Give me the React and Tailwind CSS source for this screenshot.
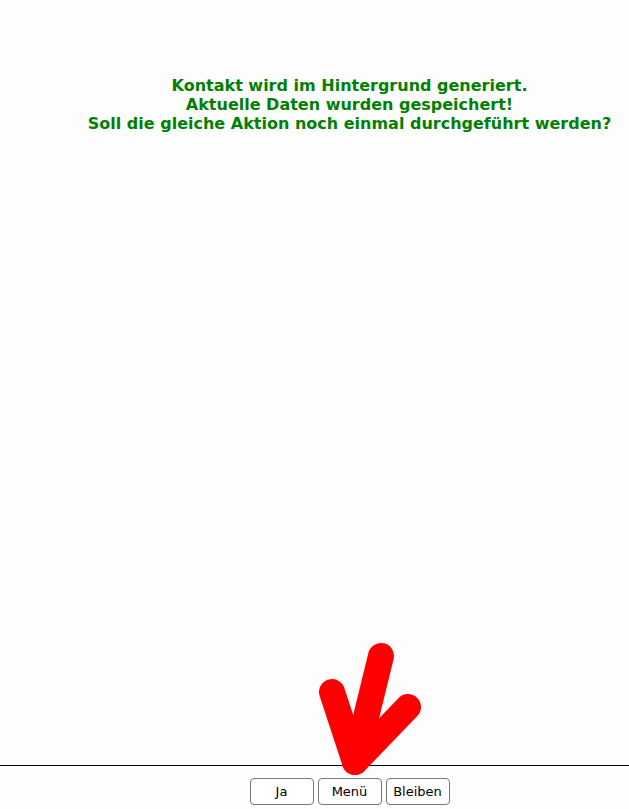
import React from "react"

function Pointer() {
    // red hand-drawn arrow pointing down at the "Menü" button
    return (
        <svg className="absolute left-0 top-0 pointer-events-none" width="629" height="809" viewBox="0 0 629 809">
            <g fill="none" stroke="#ff0000" strokeWidth="26" strokeLinecap="round" strokeLinejoin="round">
                <line x1="381" y1="656" x2="355" y2="762" />
                <polyline points="332,692 355,762 408,707" />
            </g>
        </svg>
    )
}

function ActionButton({ label }) {
    return (
        <button className="w-[64px] h-[27px] border border-[#767676] rounded-[4px] bg-white text-[13px] text-black leading-none">
            {label}
        </button>
    )
}

export default function App() {
    return (
        <div className="relative w-[629px] h-[809px] bg-[#fdfdfd] flex flex-col overflow-hidden" style={{ fontFamily: '"DejaVu Sans", Verdana, sans-serif' }}>
            <div className="flex-1 pl-[70px] pt-[76px]">
                <div className="text-center text-[16px] leading-[19px] font-bold text-[#008000]">
                    <p>Kontakt wird im Hintergrund generiert.</p>
                    <p>Aktuelle Daten wurden gespeichert!</p>
                    <p>Soll die gleiche Aktion noch einmal durchgeführt werden?</p>
                </div>
            </div>
            <div className="border-t border-black pt-[12px] pb-[4px] pl-[70px] flex justify-center gap-[4px]">
                <ActionButton label="Ja" />
                <ActionButton label="Menü" />
                <ActionButton label="Bleiben" />
            </div>
            <Pointer />
        </div>
    )
}
